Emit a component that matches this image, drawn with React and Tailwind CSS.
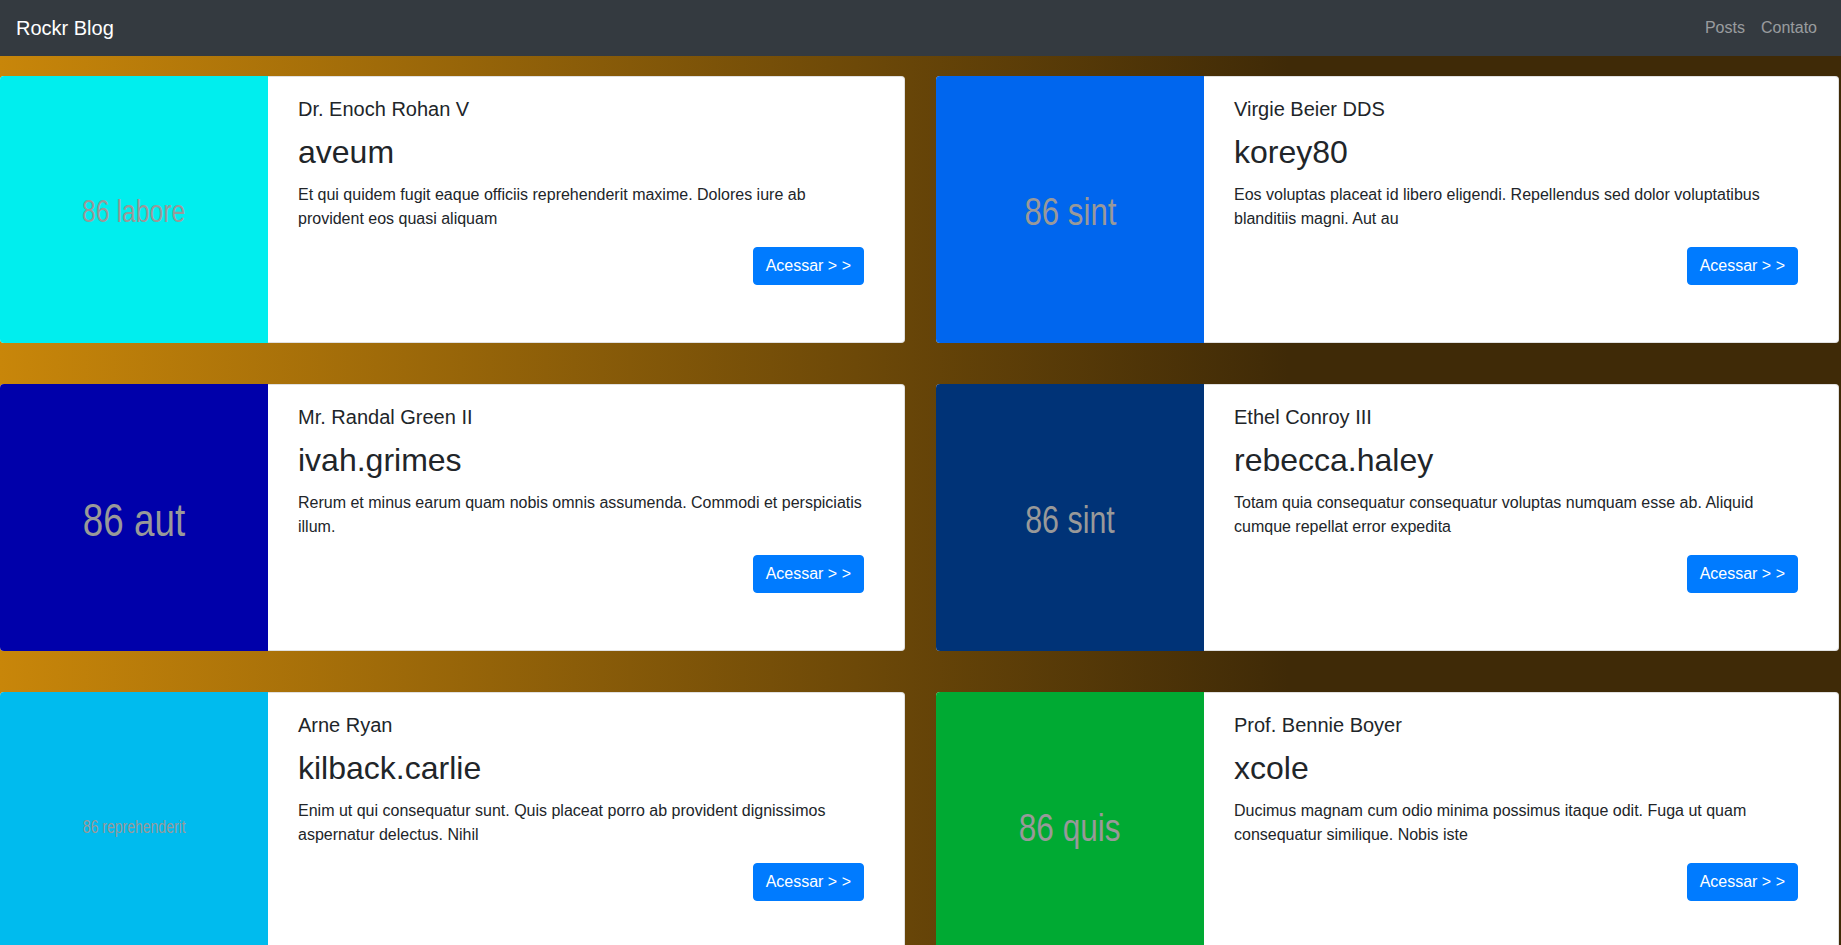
const posts = [
  {
    id: 1,
    color: "bg-[#00eeee]",
    label: "86 labore",
    labelSize: "text-[31px]",
    author: "Dr. Enoch Rohan V",
    title: "aveum",
    body: "Et qui quidem fugit eaque officiis reprehenderit maxime. Dolores iure ab provident eos quasi aliquam",
  },
  {
    id: 2,
    color: "bg-[#0066ee]",
    label: "86 sint",
    labelSize: "text-[39px]",
    author: "Virgie Beier DDS",
    title: "korey80",
    body: "Eos voluptas placeat id libero eligendi. Repellendus sed dolor voluptatibus blanditiis magni. Aut au",
  },
  {
    id: 3,
    color: "bg-[#0000aa]",
    label: "86 aut",
    labelSize: "text-[46px]",
    author: "Mr. Randal Green II",
    title: "ivah.grimes",
    body: "Rerum et minus earum quam nobis omnis assumenda. Commodi et perspiciatis illum.",
  },
  {
    id: 4,
    color: "bg-[#003377]",
    label: "86 sint",
    labelSize: "text-[38px]",
    author: "Ethel Conroy III",
    title: "rebecca.haley",
    body: "Totam quia consequatur consequatur voluptas numquam esse ab. Aliquid cumque repellat error expedita",
  },
  {
    id: 5,
    color: "bg-[#00bbee]",
    label: "86 reprehenderit",
    labelSize: "text-[17.5px]",
    author: "Arne Ryan",
    title: "kilback.carlie",
    body: "Enim ut qui consequatur sunt. Quis placeat porro ab provident dignissimos aspernatur delectus. Nihil",
  },
  {
    id: 6,
    color: "bg-[#00aa33]",
    label: "86 quis",
    labelSize: "text-[39.5px]",
    author: "Prof. Bennie Boyer",
    title: "xcole",
    body: "Ducimus magnam cum odio minima possimus itaque odit. Fuga ut quam consequatur similique. Nobis iste",
  },
];

function PostCard({ post, right }) {
  return (
    <div
      className={`flex h-[267px] rounded overflow-hidden bg-white ${
        right ? "w-[903px]" : "w-[905px]"
      }`}
    >
      {/* placeholder image */}
      <div
        className={`w-[268px] shrink-0 flex items-center justify-center ${post.color}`}
      >
        <span
          className={`${post.labelSize} leading-none mt-1 text-[#999999] scale-x-80 whitespace-nowrap`}
        >
          {post.label}
        </span>
      </div>

      <div className="flex-1 flex flex-col pl-[30px] pr-10 pt-5 border border-l-0 border-black/12 rounded-r text-[#212529]">
        <h5 className="text-[20px] leading-[1.2] mb-3">{post.author}</h5>
        <h2 className="text-[32px] leading-[1.2] mb-3">{post.title}</h2>
        <p className="text-base leading-6 mb-4">{post.body}</p>
        <div className="flex justify-end">
          <button className="px-3 py-1.5 text-base leading-6 text-white bg-[#007bff] border border-[#007bff] rounded">
            Acessar &gt; &gt;
          </button>
        </div>
      </div>
    </div>
  );
}

export default function App() {
  return (
    <div className="min-h-screen font-['Liberation_Sans',Arial,sans-serif]">
      {/* navbar */}
      <nav className="h-14 bg-[#343a40] flex items-center justify-between px-4">
        <span className="text-xl text-white">Rockr Blog</span>
        <div className="flex text-base text-white/50">
          <a className="px-2">Posts</a>
          <a className="px-2">Contato</a>
        </div>
      </nav>

      {/* posts grid */}
      <div className="min-h-[889px] pt-5 pb-5 bg-[linear-gradient(to_right,#c8860a_0%,#3f2a07_70%)]">
        <div className="grid grid-cols-[905px_903px] gap-x-[31px] gap-y-[41px]">
          {posts.map((post, i) => (
            <PostCard key={post.id} post={post} right={i % 2 === 1} />
          ))}
        </div>
      </div>
    </div>
  );
}
